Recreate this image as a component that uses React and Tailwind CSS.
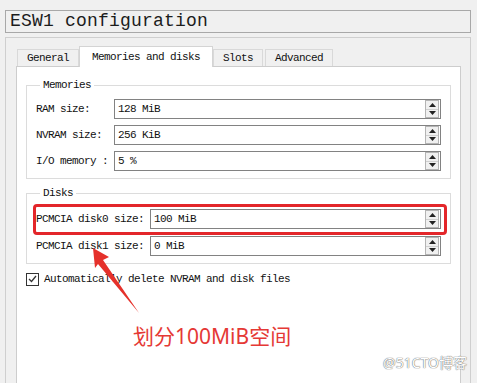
import React from "react";

const mono = "font-['Liberation_Mono',_'DejaVu_Sans_Mono',_monospace]";

const Spin = () => (
  <div className="mr-px flex h-[18px] w-[14px] flex-col border border-[#b4b4b4] bg-[#f0f0f0]">
    <div className="flex flex-1 items-center justify-center border-b border-[#d0d0d0]">
      <svg width="7" height="4" viewBox="0 0 7 4">
        <polygon points="3.5,0 7,4 0,4" fill="#222" />
      </svg>
    </div>
    <div className="flex flex-1 items-center justify-center">
      <svg width="7" height="4" viewBox="0 0 7 4">
        <polygon points="0,0 7,0 3.5,4" fill="#222" />
      </svg>
    </div>
  </div>
);

const Field = ({ label, value, labelWidth }) => (
  <div className="flex items-center">
    <span className={labelWidth}>{label}</span>
    <div className="flex h-[20px] flex-1 items-center border border-[#828282] bg-white pl-[3px]">
      <span className="flex-1">{value}</span>
      <Spin />
    </div>
  </div>
);

const Tab = ({ name, active }) =>
  active ? (
    <div className="-mb-px flex h-[21px] items-center border border-b-0 border-[#d4d4d4] bg-white px-[12px]">
      {name}
    </div>
  ) : (
    <div className="flex h-[17px] items-center border border-b-0 border-[#d9d9d9] bg-[#f0f0f0] px-[9px]">
      {name}
    </div>
  );

export default function App() {
  return (
    <div
      className={`relative h-[383px] w-[477px] overflow-hidden bg-[#f0f0f0] pt-[10px] text-[11px] tracking-[-0.6px] text-[#111] ${mono}`}
    >
      <div className="ml-[5px] flex h-[23px] w-[466px] items-center border border-[#a8a8a8] pl-[4px] text-[18px] tracking-[0.2px] text-[#1c1c1c]">
        ESW1 configuration
      </div>

      <div className="ml-[5px] mt-[4px] h-[400px] w-[466px] border border-b-0 border-[#cfcfcf] pl-[10px] pr-[9px] pt-[8px]">
        <div className="flex items-end pl-px">
          <Tab name="General" />
          <Tab name="Memories and disks" active />
          <Tab name="Slots" />
          <div className="w-[2px]" />
          <Tab name="Advanced" />
        </div>

        <div className="h-[330px] border border-[#cdcdcd] bg-white px-[9px] pt-[11px]">
          <fieldset className="border border-[#dcdcdc] px-[9px] pb-[7px] pt-[7px]">
            <legend className="ml-[4px] px-[3px] leading-[14px]">Memories</legend>
            <div className="flex flex-col gap-[6px]">
              <Field label="RAM size:" value="128 MiB" labelWidth="w-[78px]" />
              <Field label="NVRAM size:" value="256 KiB" labelWidth="w-[78px]" />
              <Field label="I/O memory :" value="5 %" labelWidth="w-[78px]" />
            </div>
          </fieldset>

          <fieldset className="mt-[7px] border border-[#dcdcdc] px-[9px] pb-[7px] pt-[9px]">
            <legend className="ml-[4px] px-[3px] leading-[14px]">Disks</legend>
            <div className="flex flex-col gap-[7px]">
              <div className="relative">
                <Field label="PCMCIA disk0 size:" value="100 MiB" labelWidth="w-[114px]" />
                <div className="absolute -bottom-[6px] -left-[3px] -right-[6px] -top-[5px] rounded-[4px] border-[3px] border-[#e3262a]" />
              </div>
              <Field label="PCMCIA disk1 size:" value="0 MiB" labelWidth="w-[114px]" />
            </div>
          </fieldset>

          <div className="mt-[7px] flex items-center">
            <div className="flex h-[13px] w-[13px] items-center justify-center border border-[#333] bg-white">
              <svg width="9" height="8" viewBox="0 0 9 8">
                <polyline points="1,4 3.5,6.5 8,1" fill="none" stroke="#333" strokeWidth="1.3" />
              </svg>
            </div>
            <span className="ml-[5px]">Automatically delete NVRAM and disk files</span>
          </div>

          <div className="ml-[107px] mt-[34px] font-['Noto_Sans',_'Noto_Sans_CJK_SC',_sans-serif] text-[21px] leading-[28px] tracking-normal text-[#e53935]">
            划分100MiB空间
          </div>
        </div>
      </div>

      <svg className="absolute left-0 top-0" width="477" height="383" viewBox="0 0 477 383">
        <polygon points="93,248 109,257 103,260 139,313 98,264 95,268" fill="#e5312b" />
      </svg>

      <div className="absolute bottom-[10px] right-[10px] font-['Noto_Sans',_'Noto_Sans_CJK_SC',_sans-serif] text-[14px] tracking-normal text-white [text-shadow:0_0_1px_#666,0_0_1px_#666]">
        @51CTO博客
      </div>
    </div>
  );
}
